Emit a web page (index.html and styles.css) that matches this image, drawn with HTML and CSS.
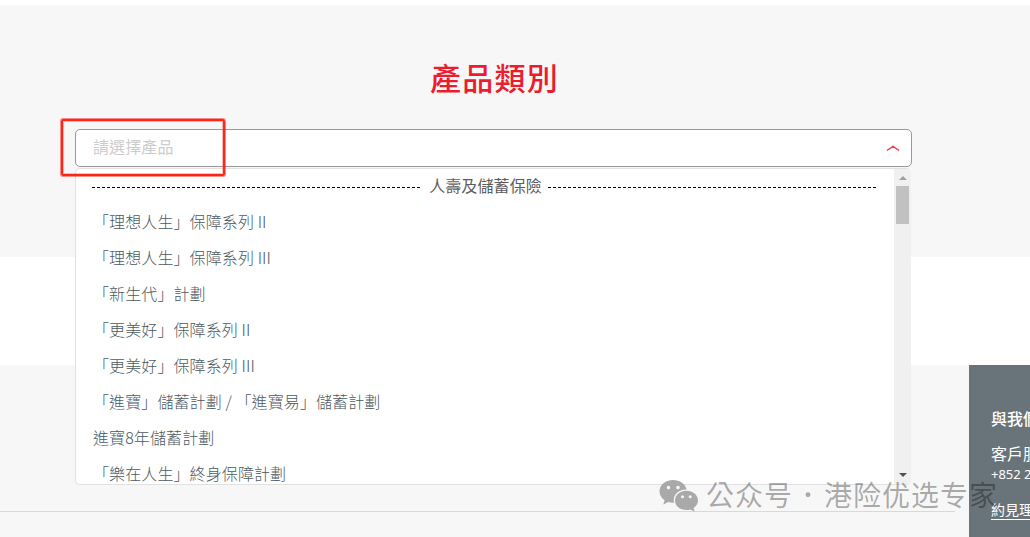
FILE: index.html
```html
<!DOCTYPE html>
<html lang="zh-Hant">
<head>
  <meta charset="UTF-8" />
  <title>產品類別</title>
  <link rel="stylesheet" href="styles.css">
</head>
<body>

<section class="product-section">
  <h2 class="title">產品類別</h2>
  <div class="select">
    <div class="select-box">
      <span class="placeholder">請選擇產品</span>
      <svg class="arrow" width="14" height="8" viewBox="0 0 14 8"><path d="M1 7.300 Q4 5.600 7 3.200 Q10 5.600 13 7.300" fill="none" stroke="#ee3a4e" stroke-width="1.400"/></svg>
    </div>
    <div class="highlight"></div>

    <div class="menu">
      <div class="menu-list">
        <div class="group"><span class="group-name">人壽及儲蓄保險</span></div>
        <div class="option">「理想人生」保障系列 II</div>
        <div class="option">「理想人生」保障系列 III</div>
        <div class="option">「新生代」計劃</div>
        <div class="option">「更美好」保障系列 II</div>
        <div class="option">「更美好」保障系列 III</div>
        <div class="option">「進寶」儲蓄計劃 / 「進寶易」儲蓄計劃</div>
        <div class="option">進寶8年儲蓄計劃</div>
        <div class="option">「樂在人生」終身保障計劃</div>
      </div>
      <div class="scrollbar">
        <div class="scroll-up"></div>
        <div class="scroll-thumb"></div>
        <div class="scroll-down"></div>
      </div>
    </div>
  </div>
</section>

<footer class="footer">
  <div class="footer-links"></div>
  <div class="contact">
    <h3>與我們</h3>
    <p class="service">客戶服</p>
    <p class="phone">+852 2</p>
    <a class="meet">約見理</a>
  </div>
</footer>

<div class="watermark">
  <svg width="40" height="34" viewBox="0 0 40 34">
    <path fill="#a9a9a9" fill-rule="evenodd" d="M14 1C6.300 1 .5 6 .5 12.300c0 3.700 2 6.800 5.100 8.900L4.300 25.500l5-2.500c1.500.4 3 .7 4.700.7h1C13.300 16 19.500 10.400 27.600 10.600 26.500 5 21 1 14 1zM9.500 6.800a1.800 1.800 0 1 1 0 3.600 1.800 1.800 0 0 1 0-3.600zM19 6.800a1.800 1.800 0 1 1 0 3.600 1.800 1.800 0 0 1 0-3.600z"/>
    <path fill="#a9a9a9" fill-rule="evenodd" d="M27.500 11.700C21 11.700 16 16 16 21.400S21 31 27.500 31c1.400 0 2.800-.2 4-.6l4.200 2.300-1.200-3.700c2.700-1.800 4.500-4.500 4.500-7.600 0-5.400-5.100-9.700-11.500-9.700zM23.500 16.300a1.500 1.500 0 1 1 0 3 1.500 1.500 0 0 1 0-3zM31.200 16.300a1.500 1.500 0 1 1 0 3 1.500 1.500 0 0 1 0-3z"/>
  </svg>
  <span class="wm-label">公众号</span>
  <span class="wm-dot">·</span>
  <span class="wm-name">港险优选专家</span>
</div>

</body>
</html>
```
FILE: styles.css
```css
* {
  margin: 0;
  padding: 0;
  box-sizing: border-box;
}

body {
  position: relative;
  width: 1030px;
  height: 537px;
  padding-top: 5px;
  overflow: hidden;
  background: #fff;
  font-family: "Noto Sans CJK TC", sans-serif;
  font-weight: 300;
}

.product-section {
  height: 252px;
  padding: 50px 118px 0 75px;
  background: #f7f7f7;
}

.title {
  height: 74px;
  padding-left: 2px;
  font-size: 31px;
  font-weight: 500;
  line-height: 44px;
  letter-spacing: 1.2px;
  text-align: center;
  color: #ed1b2e;
}

.select {
  position: relative;
}

.select-box {
  display: flex;
  align-items: center;
  justify-content: space-between;
  height: 38px;
  padding: 0 11px 2px 17px;
  background: #fff;
  border: 1px solid #999;
  border-radius: 5px;
}

.placeholder {
  padding-bottom: 2px;
  font-size: 16px;
  font-weight: 400;
  letter-spacing: 0.1px;
  color: #ccc;
}

.highlight {
  position: absolute;
  left: -14px;
  top: -10px;
  width: 164px;
  height: 57px;
  border: 2px solid #ff2418;
  border-radius: 2px;
  box-shadow: 0 0 0 1px rgba(255, 36, 24, 0.5), inset 0 0 0 1px rgba(255, 36, 24, 0.3);
  z-index: 2;
}

.menu {
  position: absolute;
  left: 0;
  top: 39px;
  display: flex;
  width: 836px;
  height: 317px;
  overflow: hidden;
  background: #fff;
  border: 1px solid #e1e1e1;
  border-right: none;
  border-radius: 5px;
}

.menu-list {
  flex: 1;
}

.group {
  display: flex;
  align-items: center;
  height: 36px;
  padding: 0 16px;
}

.group::before,
.group::after {
  content: "";
  flex: 1;
  height: 1px;
  background: repeating-linear-gradient(to right, #000 0 3px, transparent 3px 5px);
}

.group-name {
  padding: 0 6px 4px 7px;
  font-size: 16px;
  font-weight: 400;
  letter-spacing: 0.1px;
  color: #5c5c5c;
}

.option {
  height: 36px;
  padding-left: 17px;
  font-size: 16px;
  line-height: 33px;
  letter-spacing: 0.1px;
  white-space: nowrap;
  color: #4c5962;
}

.scrollbar {
  display: flex;
  flex-direction: column;
  align-items: center;
  width: 17px;
  background: #f0f0f0;
}

.scroll-up {
  margin: 7px 0 4px;
  border: 4px solid transparent;
  border-top: 0;
  border-bottom-color: #a0a0a0;
}

.scroll-thumb {
  width: 13px;
  height: 38px;
  margin-top: 2px;
  background: #c1c1c1;
}

.scroll-down {
  margin-top: auto;
  margin-bottom: 7px;
  border: 4px solid transparent;
  border-bottom: 0;
  border-top-color: #505050;
}

.footer {
  display: flex;
  gap: 14px;
  height: 172px;
  margin-top: 108px;
  background: #f7f7f7;
}

.footer-links {
  width: 955px;
  height: 147px;
  border-bottom: 1px solid #d9d9d9;
}

.contact {
  flex: 1;
  min-width: 0;
  padding: 41px 0 0 22px;
  overflow: hidden;
  white-space: nowrap;
  background: #69747a;
  color: #fff;
}

.contact h3 {
  height: 36px;
  font-size: 16px;
  font-weight: 500;
  line-height: 24px;
}

.service {
  font-size: 16px;
  font-weight: 400;
  line-height: 22px;
}

.phone {
  height: 36px;
  font-family: "Noto Sans", sans-serif;
  font-size: 13px;
  font-weight: 400;
  line-height: 20px;
}

.meet {
  display: block;
  height: 20px;
  border-bottom: 1px solid #fff;
  font-size: 14px;
  font-weight: 400;
  line-height: 18px;
}

.watermark {
  position: absolute;
  left: 659px;
  top: 476px;
  display: flex;
  align-items: center;
  height: 36px;
  font-family: "Noto Sans CJK SC", sans-serif;
  font-size: 28px;
  font-weight: 400;
  letter-spacing: 1px;
  white-space: nowrap;
  color: rgba(0, 0, 0, 0.32);
  z-index: 3;
}

.watermark svg {
  margin-top: 4px;
}

.wm-label {
  margin-left: 7px;
}

.wm-dot {
  width: 31px;
  font-family: "Noto Sans", sans-serif;
  font-weight: 700;
  text-align: center;
}
```
